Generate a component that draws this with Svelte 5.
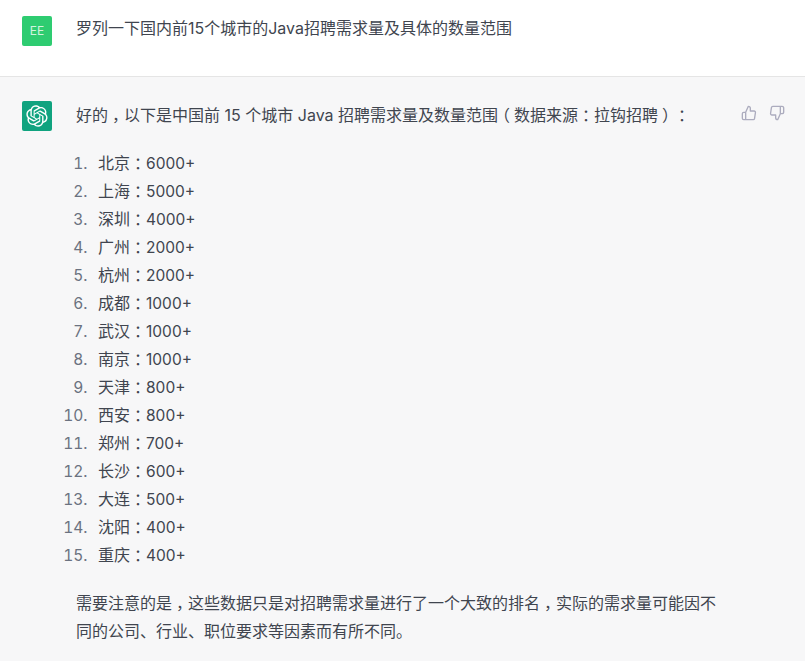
<script>
  const cities = [
    ['北京', '6000+'], ['上海', '5000+'], ['深圳', '4000+'], ['广州', '2000+'], ['杭州', '2000+'],
    ['成都', '1000+'], ['武汉', '1000+'], ['南京', '1000+'], ['天津', '800+'], ['西安', '800+'],
    ['郑州', '700+'], ['长沙', '600+'], ['大连', '500+'], ['沈阳', '400+'], ['重庆', '400+']
  ];

  // fullwidth punctuation sits centred in the original, so it gets its own box
  const parts = (text) => text.split(/([，：（）])/).filter(Boolean);
  const isPunct = (s) => '，：（）'.includes(s);

  const intro = '好的，以下是中国前 15 个城市 Java 招聘需求量及数量范围（数据来源：拉钩招聘）：';
  const note = '需要注意的是，这些数据只是对招聘需求量进行了一个大致的排名，实际的需求量可能因不同的公司、行业、职位要求等因素而有所不同。';
</script>

{#snippet rich(text)}{#each parts(text) as s}{#if isPunct(s)}<span class="punct">{s}</span>{:else}{s}{/if}{/each}{/snippet}

<div class="chat">
  <div class="row user">
    <div class="avatar user-avatar">EE</div>
    <div class="content">罗列一下国内前15个城市的Java招聘需求量及具体的数量范围</div>
  </div>

  <div class="row bot">
    <div class="avatar bot-avatar">
      <svg width="22" height="22" viewBox="0 0 41 41" fill="none">
        <path fill="currentColor" d="M37.5324 16.8707C37.9808 15.5241 38.1363 14.0974 37.9886 12.6859C37.8409 11.2744 37.3934 9.91076 36.676 8.68622C35.6126 6.83404 33.9882 5.3676 32.0373 4.4985C30.0864 3.62941 27.9098 3.40259 25.8215 3.85078C24.8796 2.7893 23.7219 1.94125 22.4257 1.36341C21.1295 0.785575 19.7249 0.491269 18.3058 0.500197C16.1708 0.495044 14.0893 1.16803 12.3614 2.42214C10.6335 3.67624 9.34853 5.44666 8.6917 7.47815C7.30085 7.76286 5.98686 8.3414 4.8377 9.17505C3.68854 10.0087 2.73073 11.0782 2.02839 12.312C0.956464 14.1591 0.498905 16.2988 0.721698 18.4228C0.944492 20.5467 1.83612 22.5449 3.268 24.1293C2.81966 25.4759 2.66413 26.9026 2.81182 28.3141C2.95951 29.7256 3.40701 31.0892 4.12437 32.3138C5.18791 34.1659 6.8123 35.6322 8.76321 36.5013C10.7141 37.3704 12.8907 37.5973 14.9789 37.1492C15.9208 38.2107 17.0786 39.0587 18.3747 39.6366C19.6709 40.2144 21.0755 40.5087 22.4946 40.4998C24.6307 40.5054 26.7133 39.8321 28.4418 38.5772C30.1704 37.3223 31.4556 35.5506 32.1119 33.5179C33.5027 33.2332 34.8167 32.6547 35.9659 31.821C37.115 30.9874 38.0728 29.9178 38.7752 28.684C39.8458 26.8371 40.3023 24.6979 40.0789 22.5748C39.8556 20.4517 38.9639 18.4544 37.5324 16.8707ZM22.4978 37.8849C20.7443 37.8874 19.0459 37.2733 17.6994 36.1501C17.7601 36.117 17.8666 36.0586 17.936 36.0161L25.9004 31.4156C26.1003 31.3019 26.2663 31.137 26.3813 30.9378C26.4964 30.7386 26.5563 30.5124 26.5549 30.2825V19.0542L29.9213 20.998C29.9389 21.0068 29.9541 21.0198 29.9656 21.0359C29.977 21.052 29.9842 21.0707 29.9867 21.0902V30.3889C29.9842 32.375 29.1946 34.2791 27.7909 35.6841C26.3872 37.0892 24.4838 37.8806 22.4978 37.8849ZM6.39227 31.0064C5.51397 29.4888 5.19742 27.7107 5.49804 25.9832C5.55718 26.0187 5.66048 26.0818 5.73461 26.1244L13.699 30.7248C13.8975 30.8408 14.1233 30.902 14.3532 30.902C14.583 30.902 14.8088 30.8408 15.0073 30.7248L24.731 25.1103V28.9979C24.7321 29.0177 24.7283 29.0376 24.7199 29.0556C24.7115 29.0736 24.6988 29.0893 24.6829 29.1012L16.6317 33.7497C14.9096 34.7416 12.8643 35.0097 10.9447 34.4954C9.02506 33.9811 7.38785 32.7263 6.39227 31.0064ZM4.29707 13.6194C5.17156 12.0998 6.55279 10.9364 8.19885 10.3327C8.19885 10.4013 8.19491 10.5228 8.19491 10.6071V19.808C8.19351 20.0378 8.25334 20.2638 8.36823 20.4629C8.48312 20.6619 8.64893 20.8267 8.84863 20.9404L18.5723 26.5542L15.206 28.4979C15.1894 28.5089 15.1703 28.5155 15.1505 28.5173C15.1307 28.5191 15.1107 28.516 15.0924 28.5082L7.04046 23.8557C5.32135 22.8601 4.06716 21.2235 3.55289 19.3046C3.03862 17.3858 3.30624 15.3413 4.29707 13.6194ZM31.955 20.0556L22.2312 14.4411L25.5976 12.4981C25.6142 12.4872 25.6333 12.4805 25.6531 12.4787C25.6729 12.4769 25.6928 12.4801 25.7111 12.4879L33.7631 17.1364C34.9967 17.849 36.0017 18.8982 36.6606 20.1613C37.3194 21.4244 37.6047 22.849 37.4832 24.2684C37.3617 25.6878 36.8382 27.0432 35.9743 28.1759C35.1103 29.3086 33.9415 30.1717 32.6047 30.6641C32.6047 30.5947 32.6047 30.4733 32.6047 30.3889V21.188C32.6066 20.9586 32.5474 20.7328 32.4332 20.5338C32.319 20.3348 32.154 20.1698 31.955 20.0556ZM35.3055 15.0128C35.2464 14.9765 35.1431 14.9142 35.069 14.8717L27.1045 10.2712C26.906 10.1554 26.6803 10.0943 26.4504 10.0943C26.2206 10.0943 25.9948 10.1554 25.7963 10.2712L16.0726 15.8858V11.9982C16.0715 11.9783 16.0753 11.9585 16.0837 11.9405C16.0921 11.9225 16.1048 11.9068 16.1207 11.8949L24.1719 7.25025C25.4053 6.53903 26.8158 6.19376 28.2383 6.25482C29.6608 6.31589 31.0364 6.78077 32.2044 7.59508C33.3723 8.40939 34.2842 9.53945 34.8334 10.8531C35.3826 12.1667 35.5464 13.6095 35.3055 15.0128ZM14.2424 21.9419L10.8752 19.9981C10.8576 19.9893 10.8423 19.9763 10.8309 19.9602C10.8195 19.9441 10.8122 19.9254 10.8098 19.9058V10.6071C10.8107 9.18295 11.2173 7.78848 11.9819 6.58696C12.7466 5.38544 13.8377 4.42659 15.1275 3.82264C16.4173 3.21869 17.8524 2.99464 19.2649 3.1767C20.6775 3.35876 22.0089 3.93941 23.1034 4.85067C23.0427 4.88379 22.937 4.94215 22.8668 4.98473L14.9024 9.58517C14.7025 9.69878 14.5366 9.86356 14.4215 10.0626C14.3065 10.2616 14.2466 10.4877 14.2479 10.7175L14.2424 21.9419ZM16.071 17.9991L20.4018 15.4978L24.7325 17.9975V22.9985L20.4018 25.4983L16.071 22.9985V17.9991Z"/>
      </svg>
    </div>
    <div class="content">
      <p>{@render rich(intro)}</p>
      <ol>
        {#each cities as [city, count]}
          <li>{city}{@render rich('：')}<span class="count">{count}</span></li>
        {/each}
      </ol>
      <p>{@render rich(note)}</p>
    </div>
    <div class="actions">
      <svg viewBox="0 0 24 24" width="16" height="16" fill="none" stroke="currentColor" stroke-width="2" stroke-linecap="round" stroke-linejoin="round">
        <path d="M14 9V5a3 3 0 0 0-3-3l-4 9v11h11.28a2 2 0 0 0 2-1.7l1.38-9a2 2 0 0 0-2-2.3zM7 22H4a2 2 0 0 1-2-2v-7a2 2 0 0 1 2-2h3"/>
      </svg>
      <svg viewBox="0 0 24 24" width="16" height="16" fill="none" stroke="currentColor" stroke-width="2" stroke-linecap="round" stroke-linejoin="round">
        <path d="M10 15v4a3 3 0 0 0 3 3l4-9V2H5.72a2 2 0 0 0-2 1.7l-1.38 9a2 2 0 0 0 2 2.3zm7-13h2.67A2.31 2.31 0 0 1 22 4v7a2.31 2.31 0 0 1-2.33 2H17"/>
      </svg>
    </div>
  </div>
</div>

<style>
  :global(body) {
    background: #f7f7f8;
    overflow: hidden;
  }
  .chat {
    height: 100vh;
    overflow: hidden;
    font-family: Inter, "Noto Sans CJK SC", sans-serif;
    font-size: 16px;
    line-height: 28px;
    color: #40454f;
  }
  .punct {
    display: inline-block;
    width: 1em;
    line-height: 1;
    text-align: center;
    font-family: "Noto Sans CJK SC", sans-serif;
    font-feature-settings: "halt";
  }
  .count {
    font-size: 15.5px;
    line-height: 1;
  }
  .row {
    display: flex;
    gap: 24px;
    padding-left: 22px;
  }
  .user {
    background: #fff;
    box-sizing: border-box;
    padding-top: 16px;
    border-bottom: 1px solid #e5e5e5;
    height: 77px;
  }
  .avatar {
    width: 30px;
    height: 30px;
    flex: none;
    border-radius: 2px;
    display: flex;
    align-items: center;
    justify-content: center;
  }
  .user-avatar {
    background: #2ecc71;
    color: rgba(255, 255, 255, 0.8);
    font-size: 12px;
    line-height: 1;
  }
  .bot-avatar {
    background: #10a37f;
    color: #fff;
  }
  .user .content {
    margin-top: -2px;
  }
  .bot {
    padding-top: 24px;
    padding-right: 20px;
  }
  .bot .content {
    flex: 1;
    min-width: 0;
  }
  p {
    margin: 0;
  }
  ol {
    margin: 20px 0;
    padding: 0 0 0 22px;
  }
  li {
    height: 28px;
  }
  li::marker {
    color: #6b7280;
    font-size: 15.5px;
    content: counter(list-item) ".\2002\2009";
  }
  .actions {
    display: flex;
    gap: 12px;
    flex: none;
    padding-top: 4px;
    color: #acacbe;
    align-self: flex-start;
  }
</style>
